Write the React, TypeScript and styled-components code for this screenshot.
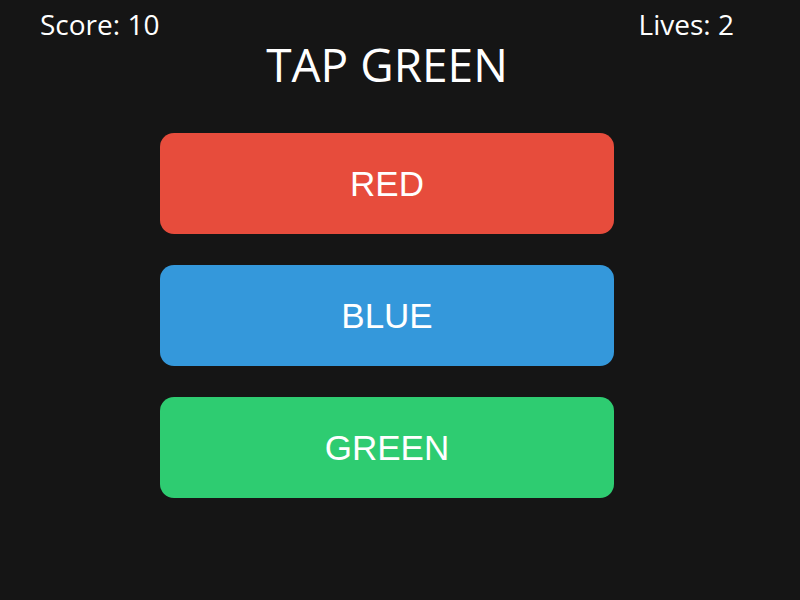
import * as React from "react"
import styled, { createGlobalStyle } from "styled-components"

const GlobalStyle = createGlobalStyle`
  html, body {
    margin: 0;
    padding: 0;
    background: #151515;
  }
  body {
    width: 800px;
    height: 600px;
    overflow: hidden;
  }
`

const Screen = styled.div`
  width: 800px;
  height: 600px;
  box-sizing: border-box;
  padding: 5px 66px 0 40px;
  background: #151515;
  color: #ffffff;
  font-family: "Open Sans", "Noto Sans", sans-serif;
`

const Hud = styled.div`
  display: flex;
  justify-content: space-between;
  font-size: 28px;
  line-height: 38px;
`

const Title = styled.h1`
  margin: -10px 0 0;
  text-align: center;
  font-weight: 400;
  font-size: 46px;
  line-height: 62px;
`

const Choices = styled.div`
  display: flex;
  flex-direction: column;
  align-items: center;
  gap: 31px;
  margin-top: 38px;
`

const ChoiceButton = styled.button<{ $bg: string }>`
  width: 454px;
  height: 101px;
  border: none;
  border-radius: 14px;
  background: ${({ $bg }) => $bg};
  color: #ffffff;
  font-family: "Liberation Sans", Arial, sans-serif;
  font-size: 35px;
  cursor: pointer;
`

const choices = [
  { label: "RED", color: "#e74c3c" },
  { label: "BLUE", color: "#3498db" },
  { label: "GREEN", color: "#2ecc71" },
]

const App: React.FC = () => {
  const [score, setScore] = React.useState(10)
  const [lives, setLives] = React.useState(2)

  const handleTap = (label: string) => {
    if (label === "GREEN") setScore(score + 1)
    else setLives(Math.max(0, lives - 1))
  }

  return (
    <Screen>
      <GlobalStyle />
      <Hud>
        <span>Score: {score}</span>
        <span>Lives: {lives}</span>
      </Hud>
      <Title>TAP GREEN</Title>
      <Choices>
        {choices.map((c) => (
          <ChoiceButton key={c.label} $bg={c.color} onClick={() => handleTap(c.label)}>
            {c.label}
          </ChoiceButton>
        ))}
      </Choices>
    </Screen>
  )
}

export default App
